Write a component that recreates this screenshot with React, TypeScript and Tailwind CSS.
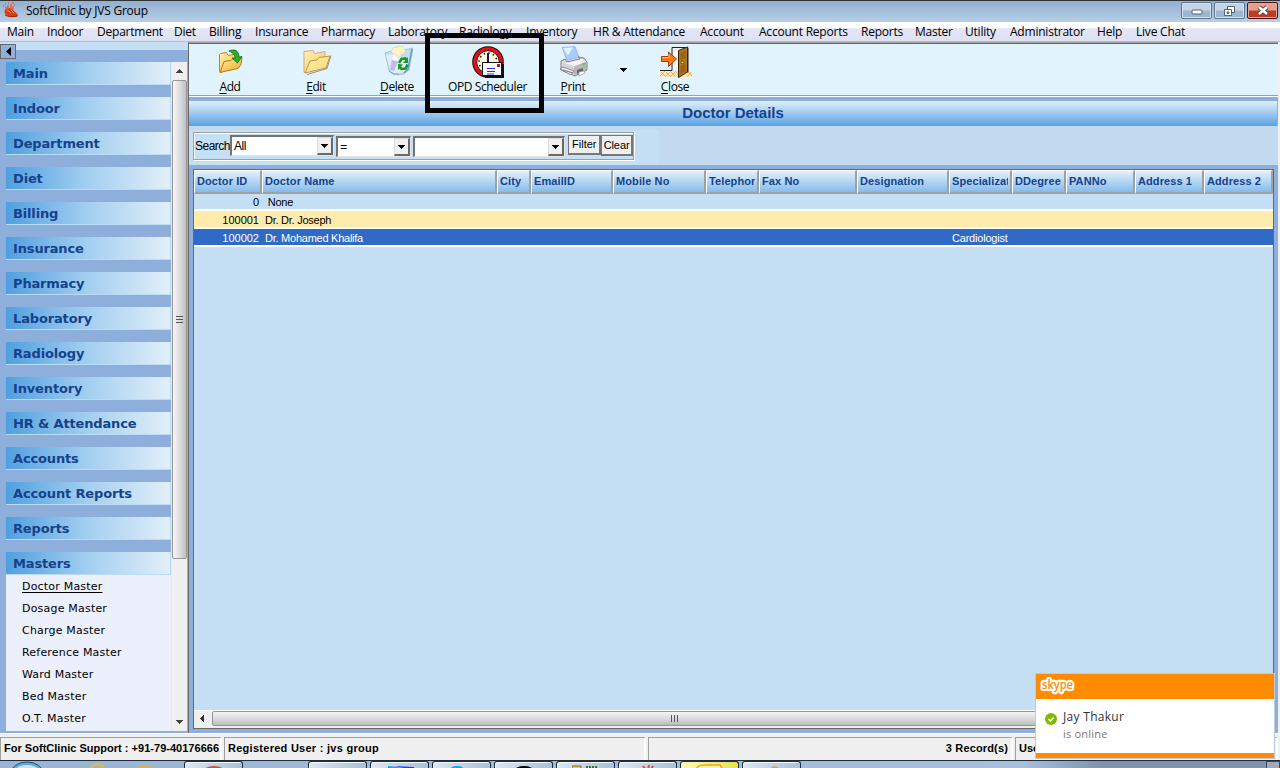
import { useState } from 'react';
import type { ReactNode } from 'react';

const menuItems = [
  'Main', 'Indoor', 'Department', 'Diet', 'Billing', 'Insurance', 'Pharmacy', 'Laboratory',
  'Radiology', 'Inventory', 'HR & Attendance', 'Account', 'Account Reports', 'Reports',
  'Master', 'Utility', 'Administrator', 'Help', 'Live Chat',
];

const modules = [
  'Main', 'Indoor', 'Department', 'Diet', 'Billing', 'Insurance', 'Pharmacy', 'Laboratory',
  'Radiology', 'Inventory', 'HR & Attendance', 'Accounts', 'Account Reports', 'Reports', 'Masters',
];

const masters = [
  'Doctor Master', 'Dosage Master', 'Charge Master', 'Reference Master',
  'Ward Master', 'Bed Master', 'O.T. Master',
];

const columns = [
  'Doctor ID', 'Doctor Name', 'City', 'EmailID', 'Mobile No', 'Telephone', 'Fax No',
  'Designation', 'Specialization', 'DDegree', 'PANNo', 'Address 1', 'Address 2',
];

interface Doctor {
  id: string;
  name: string;
  specialization: string;
}

const doctors: Doctor[] = [
  { id: '0', name: '\u00a0None', specialization: '' },
  { id: '100001', name: 'Dr. Dr. Joseph', specialization: '' },
  { id: '100002', name: 'Dr. Mohamed Khalifa', specialization: 'Cardiologist' },
];

const gridCols =
  'grid grid-cols-[68px_235px_34px_82px_93px_53px_98px_92px_63px_54px_69px_69px_69px]';

function HeartLogo() {
  return (
    <svg width="16" height="17" viewBox="0 0 16 17">
      <path d="M5 7c-3 1-3 5-1 7 3 2 9 3 12 1 0-2-2-4-4-5-1-2-4-4-7-3z" fill="#d8401c" />
      <path d="M6 8V4M9 8V3M11 8V5M3 6l3 2" stroke="#e8603a" strokeWidth="1.5" />
      <path d="M3 3h1M6 2h1M10 2h2M1 5h1M12 4h1" stroke="#e8603a" strokeWidth="1.5" />
      <path d="M5 9c1 2 3 1 4 3M9 9l3 3" stroke="#ff8c66" strokeWidth="1" fill="none" />
      <path d="M3 14c3 2 8 2 12 1" stroke="#a02008" fill="none" />
    </svg>
  );
}

function FolderIcon({ add }: { add?: boolean }) {
  return (
    <svg width="32" height="32" viewBox="0 0 32 32">
      <defs>
        <linearGradient id={add ? 'backAdd' : 'back'} x1="0" y1="0" x2="1" y2="1">
          <stop offset="0" stopColor="#fff2b0" />
          <stop offset="1" stopColor={add ? '#f2b632' : '#f5ce62'} />
        </linearGradient>
        <linearGradient id={add ? 'frontAdd' : 'front'} x1="0" y1="0" x2="1" y2="1">
          <stop offset="0" stopColor="#fff3a8" />
          <stop offset="1" stopColor={add ? '#efa820' : '#f7d774'} />
        </linearGradient>
      </defs>
      {add ? (
        <>
          <path d="M5.500 8.500l1-1 6-1 2 3 9-2v12l-17 7-1-1z" fill="url(#backAdd)" stroke="#c8851c" />
          <path d="M6 26.500l4-11 7-1 2-2 9-1-1 7-3 4-14 3z" fill="url(#frontAdd)" stroke="#b8741a" />
          <path d="M15 5c6-2.500 10 0 10 6l3-.5-4.500 6.500-5.500-5h3c0-3-2-5-6-7z" fill="#2cae2a" stroke="#0d6e12" strokeWidth=".8" />
        </>
      ) : (
        <>
          <path d="M7 28.500l20-6 4-13" stroke="#6b6b6b" fill="none" opacity=".7" />
          <path d="M4 5.500l9-1 1.500 3 10.500-2v15L4 26.500z" fill="url(#back)" stroke="#d9a48c" />
          <path d="M5 27l5-12 7-1 2-2.500 11-1.500-4 12z" fill="url(#front)" stroke="#b98a34" strokeWidth=".9" />
        </>
      )}
    </svg>
  );
}

function DeleteIcon() {
  return (
    <svg width="32" height="32" viewBox="0 0 32 32">
      <path d="M4 7l6-2 18-2 4-1-4 22-5 4-6 1-5-1-4-3z" fill="#c3ddf4" stroke="#9dbdd8" strokeWidth=".8" />
      <path d="M10 6l2-4 9-2 4 5-7 6z" fill="#fff3c2" stroke="#dfcf98" strokeWidth=".6" />
      <path d="M5 9l8-1 4 2 5 3 6-3-4 15-8 3-6-2z" fill="#e4ebfa" />
      <path d="M11 12l6 4-4 9-4-1z" fill="#c0bee2" />
      <path d="M13 8l5 7-7-1z" fill="#fff" />
      <path d="M31 3l-4 20-4 4" stroke="#6c9fcd" strokeWidth="1.600" fill="none" />
      <path d="M8 25l5 3h5" stroke="#7d9bb8" fill="none" />
      <path d="M18 17l2.500-4 4-.5 1.500 2" stroke="#159a22" strokeWidth="2.600" fill="none" />
      <path d="M27 11v6h-5z" fill="#159a22" />
      <path d="M26.500 18.500l-2 4-4 .5-2-2" stroke="#159a22" strokeWidth="2.600" fill="none" />
      <path d="M17 24v-6l5 .5z" fill="#159a22" />
    </svg>
  );
}

function SchedulerIcon() {
  return (
    <svg width="32" height="32" viewBox="0 0 32 32">
      <circle cx="16" cy="16" r="15.8" fill="#111" />
      <circle cx="16" cy="16" r="14.8" fill="#f00c14" />
      <circle cx="16" cy="16" r="11.300" fill="#fff8dc" stroke="#111" />
      <circle cx="16" cy="16" r="9" fill="none" stroke="#111" strokeWidth="1.6" strokeDasharray="1.5 3.21" />
      <path d="M16 7v9" stroke="#14145a" strokeWidth="2" />
      <path d="M13 18h19v14H13z" fill="#111" />
      <path d="M10.500 16.500h19v13h-19z" fill="#fff" stroke="#111" />
      <path d="M25 18h3v3h-3z" fill="#c01414" />
      <path d="M15 22.500h8M15 25.500h8M15 28h7" stroke="#2730ff" />
    </svg>
  );
}

function PrintIcon() {
  return (
    <svg width="32" height="32" viewBox="0 0 32 32">
      <path d="M5 1.500l13-1 4 11-12 3z" fill="#a9cbff" stroke="#8fa9d0" strokeWidth=".7" />
      <path d="M6 2l10-.5-5 8z" fill="#e6f1ff" />
      <path d="M4 15l4-2 2 3 13-3-2-2 6 1 3 4v8l-12 6-14-6z" fill="#d5d5d8" stroke="#808086" />
      <path d="M4 16l13 4 12-4-4-3-3 1-13 3z" fill="#f3f3f4" />
      <path d="M17 21v8l12-5v-8z" fill="#b4b4ba" />
      <path d="M3 23l3-2 11 4-3 4z" fill="#ececef" stroke="#77777d" strokeWidth=".8" />
      <path d="M6 24l10 3" stroke="#777" />
      <path d="M20 24l6-2v3l-6 3z" fill="#666" />
      <path d="M22 26l5-1 1 2-6 3z" fill="#fff" stroke="#888" strokeWidth=".6" />
      <path d="M25 18.500l3-1" stroke="#5bc94d" strokeWidth="1.800" />
    </svg>
  );
}

function CloseIcon() {
  return (
    <svg width="34" height="32" viewBox="0 0 34 32">
      <path d="M2 25h30l2 2v4H2z" fill="#ffe6bd" />
      <path d="M3 26l5 5M8 26l5 5M13 26l5 5M18 26l4 5M2 30l5-5M7 31l6-6M12 31l6-6M30 26l4 4M29 31l4-5" stroke="#f0a95c" strokeWidth=".9" />
      <path d="M2 24.500h12V1.500h14" stroke="#222" fill="none" />
      <path d="M15 2h6v22h-6z" fill="#f6f2ea" />
      <path d="M17 4h3v17h-3z" fill="#fff" />
      <path d="M20.500 4.500l9-3.500v25l-9 5.500z" fill="#ad7421" stroke="#3d2404" />
      <path d="M29.500 1l1 1v24l-1 1z" fill="#222" />
      <path d="M22.500 7l5-2v7l-5 2zM22.500 20l5-2v7l-5 3z" fill="#96621a" />
      <circle cx="24.500" cy="16.500" r="1.300" fill="#ffe14a" stroke="#222" strokeWidth=".6" />
      <path d="M3.500 10.500h7V6l8 7-8 7.500v-5h-7z" fill="#ff7a14" stroke="#a03a08" />
      <path d="M4 11.500h7V8" stroke="#ffc070" fill="none" />
    </svg>
  );
}

function Arrow({ dir, className = '' }: { dir: 'up' | 'down' | 'left'; className?: string }) {
  const paths = { up: 'M0 4h7L3.500 0z', down: 'M0 0h7L3.500 4z', left: 'M4 0v7L0 3.500z' };
  return (
    <svg
      width={dir === 'left' ? 4 : 7}
      height={dir === 'left' ? 7 : 4}
      className={className}
      shapeRendering="crispEdges"
    >
      <path d={paths[dir]} fill="currentColor" />
    </svg>
  );
}

function ToolButton({ label, width, icon, plain }: {
  label: string;
  width: string;
  icon: ReactNode;
  plain?: boolean;
}) {
  return (
    <button className={`flex flex-col items-center pt-[2px] ${width}`}>
      {icon}
      <span className="mt-px text-[12px] leading-[16px] tracking-[-0.4px] whitespace-nowrap">
        {plain ? label : <><u className="underline-offset-2">{label[0]}</u>{label.slice(1)}</>}
      </span>
    </button>
  );
}

function Combo({ value, width }: { value: string; width: string }) {
  return (
    <div className={`flex h-[21px] items-stretch border border-t-2 border-l-2 border-[#e6e6e6] border-t-[#737373] border-l-[#737373] bg-white ${width}`}>
      <span className="flex-1 pl-[2px] text-[12px] leading-[19px] tracking-[-0.4px]">{value}</span>
      <span className="flex w-[16px] items-center justify-center border border-r-2 border-b-2 border-t-[#ddd] border-l-[#ddd] border-r-[#696969] border-b-[#696969] bg-[#f0f0f0]">
        <Arrow dir="down" />
      </span>
    </div>
  );
}

function TitleBar() {
  const box = 'flex h-[17px] w-[31px] items-center justify-center rounded-[2px] border border-[#5f7590] bg-linear-to-b from-[#c4d5e7] from-45% to-[#9db7d3] to-55% shadow-[inset_0_0_0_1px_#d3e1ef]';
  return (
    <div className="flex h-[22px] shrink-0 items-start border-t border-[#2f3439] bg-linear-to-b from-[#94afd0] to-[#b6cee6] pl-[2px]">
      <HeartLogo />
      <span className="ml-[8px] text-[12px] leading-[20px] tracking-[-0.23px]">SoftClinic by JVS Group</span>
      <div className="mt-px mr-[2px] ml-auto flex gap-[2px]">
        <span className={box}>
          <svg width="12" height="6" className="mt-[3px]"><rect x="1" y="1" width="10" height="4" rx="1" fill="#fff" stroke="#536177" /></svg>
        </span>
        <span className={box}>
          <svg width="13" height="12" fill="#fff" stroke="#536177">
            <path d="M4.500 1.500h7v6h-7z" />
            <path d="M1.500 4.500h7v6h-7z" />
            <path d="M4 7h2v1.500H4z" fill="#9db7d3" />
          </svg>
        </span>
        <span className="flex h-[17px] w-[31px] items-center justify-center rounded-[2px] border border-[#4d1319] bg-linear-to-b from-[#e3a08f] from-45% to-[#b93c23] to-55% shadow-[inset_0_0_0_1px_#e3a79c]">
          <svg width="14" height="11" viewBox="0 0 14 11">
            <path d="M3 2l8 7M11 2L3 9" stroke="#59454b" strokeWidth="4.500" />
            <path d="M3 2l8 7M11 2L3 9" stroke="#fff" strokeWidth="2.500" />
          </svg>
        </span>
      </div>
    </div>
  );
}

function Sidebar({ active, onSelect }: { active: string; onSelect: (s: string) => void }) {
  return (
    <aside className="flex w-[188px] shrink-0 flex-col bg-[#8eaedb]">
      <div className="h-[20px] bg-linear-to-b from-[#c5dff4] from-40% to-[#8eaedb] to-40% pt-[2px]">
        <button className="flex h-[15px] w-[16px] items-center justify-center border border-[#696969] bg-[#8eaedb]">
          <svg width="5" height="9"><path d="M5 0v9L0 4.500z" /></svg>
        </button>
      </div>
      <div className="flex h-[669px] pl-[6px]">
        <nav className="flex w-[165px] flex-col font-['DejaVu_Sans',sans-serif]">
          {modules.map((m) => (
            <button
              key={m}
              className="mb-[12px] flex h-[23px] shrink-0 border-r border-b border-[#b9dcf6] bg-linear-to-r from-[#4f9fe0] via-[#a3cff0] to-[#e2eff9] pl-[7px] text-[13px] leading-[24px] font-bold tracking-[-0.15px] text-[#15428b] last-of-type:mb-0"
            >
              {m}
            </button>
          ))}
          <ul className="flex-1 bg-[#ecf0fc] pt-px pl-[16px]">
            {masters.map((m) => (
              <li
                key={m}
                onClick={() => onSelect(m)}
                className={`h-[22px] text-[11px] leading-[22px] tracking-[0.2px] ${m === active ? 'underline underline-offset-2' : ''}`}
              >
                {m}
              </li>
            ))}
          </ul>
        </nav>
        <div className="flex w-[16px] flex-col items-center border-l border-[#e4e8f0] bg-[#f0f0f0]">
          <Arrow dir="up" className="my-[7px] shrink-0 text-[#444]" />
          <div className="flex h-[479px] w-[15px] items-center justify-center rounded-[2px] border border-[#979797] bg-linear-to-r from-[#f6f6f6] via-[#dedee0] to-[#bfc0c4]">
            <svg width="7" height="8"><path d="M0 .5h7M0 3.500h7M0 6.500h7" stroke="#555" /></svg>
          </div>
          <Arrow dir="down" className="mt-auto mb-[7px] text-[#444]" />
        </div>
      </div>
    </aside>
  );
}

function DoctorGrid() {
  const [selected, setSelected] = useState('100002');

  const rowColor = (id: string, i: number) => {
    if (id === selected) return 'bg-[#316ac5] text-white';
    return i % 2 ? 'bg-[#ffecac]' : 'bg-[#c5dff5]';
  };

  return (
    <div className="mr-[4px] ml-[4px] flex h-[560px] flex-col border border-[#696969] bg-[#c5dff5] text-[11px]">
      <div className={`${gridCols} h-[24px] shrink-0`}>
        {columns.map((c) => (
          <div
            key={c}
            className="border-t border-r-2 border-b-2 border-l border-[#a0a0a0] border-t-white border-l-white bg-linear-to-b from-[#e3f0fb] to-[#85bbe9] pr-[2px] pl-[2px] leading-[21px] font-bold tracking-[0.1px] whitespace-nowrap text-[#15428b]"
          >
            <div className="overflow-hidden">{c}</div>
          </div>
        ))}
      </div>
      {doctors.map((d, i) => (
        <div
          key={d.id}
          onClick={() => setSelected(d.id)}
          className={`${gridCols} shrink-0 border-b-2 border-white ${rowColor(d.id, i)} ${i === 0 ? 'h-[17px] leading-[17px]' : 'h-[18px] leading-[19px]'}`}
        >
          <span className="pr-[3px] text-right">{d.id}</span>
          <span className="pl-[3px] tracking-[-0.25px]">{d.name}</span>
          <span className="col-start-9 pl-[3px] tracking-[-0.2px]">{d.specialization}</span>
        </div>
      ))}
      <div className="mt-auto flex h-[18px] items-start border-t border-white bg-[#efefef]">
        <Arrow dir="left" className="mt-[4px] mr-[8px] ml-[6px] shrink-0 text-[#333]" />
        <div className="flex h-[15px] w-[925px] items-center justify-center rounded-[2px] border border-[#979797] bg-linear-to-b from-[#f5f5f5] via-[#dcdcdc] to-[#bdbdbd]">
          <svg width="9" height="7"><path d="M1.500 0v7M4.500 0v7M7.500 0v7" stroke="#555" /></svg>
        </div>
      </div>
    </div>
  );
}

function StatusBar() {
  const cell = 'mt-[3px] h-[23px] border-t border-l border-r-2 border-[#a0a0a0] border-r-white px-[3px] leading-[21px] whitespace-nowrap';
  return (
    <footer className="flex h-[27px] shrink-0 border-t border-white bg-[#f0f0f0] font-['Liberation_Sans',sans-serif] text-[11px] font-bold">
      <div className={`${cell} mr-[2px] w-[222px] tracking-[0.02px]`}>For SoftClinic Support : +91-79-40176666</div>
      <div className={`${cell} mr-[2px] w-[422px] tracking-[0.27px]`}>Registered User : jvs group</div>
      <div className={`${cell} mr-[2px] w-[365px] text-right tracking-[0.15px]`}>3 Record(s)</div>
      <div className={`${cell} w-[263px]`}>User : Administrator</div>
    </footer>
  );
}

function Taskbar() {
  const btn = 'flex h-[8px] w-[59px] shrink-0 justify-center rounded-t-[3px] border border-b-0 border-[#1d2d3f] bg-linear-to-r from-[#dbe6f2] to-[#a9c0da] shadow-[inset_1px_1px_0_#f3f8fc]';
  return (
    <div className="flex h-[8px] shrink-0 overflow-hidden border-t border-[#202c3a] bg-linear-to-r from-[#9ab4d3] via-[#a7bfdc] via-80% to-[#7f93ab] to-86%">
      <svg width="184" height="8" className="shrink-0">
        <ellipse cx="27" cy="12" rx="16" ry="11" fill="#6ba7cf" stroke="#24506f" />
        <ellipse cx="27" cy="9" rx="11" ry="5" fill="#c6e4f3" />
        <path d="M90 8c2-5 11-6 14-2" stroke="#e7b83b" strokeWidth="2" fill="none" />
        <path d="M138 5h13v3h-13z" fill="#d8b35e" />
      </svg>
      <div className={`${btn} mr-[65px]`}>
        <svg width="30" height="8"><ellipse cx="15" cy="12" rx="13" ry="8" fill="#dd4b3e" /></svg>
      </div>
      <div className={`${btn} mr-[3px]`} />
      <div className={`${btn} mr-[3px]`}>
        <svg width="28" height="8"><path d="M2 4l26 3v1H2z" fill="#00a8f4" /><path d="M8 4l20 1v3z" fill="#1743e8" /></svg>
      </div>
      <div className={`${btn} mr-[3px]`}>
        <svg width="28" height="8"><ellipse cx="9" cy="9" rx="8" ry="5" fill="#00aff0" /><ellipse cx="18" cy="10" rx="8" ry="4" fill="#00aff0" /></svg>
      </div>
      <div className={`${btn} mr-[3px]`}>
        <svg width="24" height="8"><ellipse cx="12" cy="9" rx="10" ry="5" /></svg>
      </div>
      <div className={`${btn} mr-[3px]`}>
        <svg width="28" height="8"><path d="M0 4h9v4H0z" fill="#e0c66a" stroke="#8a6d1c" /><path d="M14 5h12" stroke="#37772c" strokeWidth="2" strokeDasharray="2 1" /></svg>
      </div>
      <div className={`${btn} mr-[3px]`}>
        <svg width="18" height="8"><path d="M4 4l3 4M10 3l-1 5M14 4l-2 4" stroke="#dc4c24" strokeWidth="2" /></svg>
      </div>
      <div className="mr-[3px] flex h-[8px] w-[59px] shrink-0 justify-center rounded-t-[3px] border border-b-0 border-[#1d2d3f] bg-linear-to-r from-[#fff8b4] to-[#e9df4a]">
        <svg width="30" height="8"><path d="M1 8c1-5 6-5 10-5h14l3 5" fill="#fff3ac" stroke="#e9a71c" strokeWidth="1.500" /></svg>
      </div>
      <div className={btn}>
        <svg width="24" height="8"><path d="M9 8c3-5 9-5 11 0z" fill="#d4a067" /></svg>
      </div>
      <div className="ml-auto h-[8px] w-[14px] border border-[#3e4a59] bg-[#a0aab8]" />
    </div>
  );
}

function SkypePopup() {
  return (
    <div className="absolute top-[673px] left-[1035px] flex h-[86px] w-[240px] flex-col border border-[#b9cbdc] bg-white font-['Open_Sans',sans-serif]">
      <div className="h-[25px] bg-[#ff8c00] pt-[3px] pl-[3px]">
        <svg width="40" height="20" viewBox="0 0 40 20">
          <text
            x="3"
            y="12"
            textLength="31"
            lengthAdjust="spacingAndGlyphs"
            fontSize="12.500"
            fontWeight="600"
            fill="#ff8c00"
            stroke="#fff"
            strokeWidth="4.500"
            strokeLinejoin="round"
            paintOrder="stroke"
            fontFamily="Open Sans"
          >
            skype
          </text>
        </svg>
      </div>
      <div className="flex flex-1 pt-[10px] pl-[9px]">
        <svg width="12" height="12" className="mt-[4px] mr-[6px]">
          <circle cx="6" cy="6" r="6" fill="#7fba00" />
          <path d="M3.500 6l2 2 3-3.500" stroke="#fff" strokeWidth="1.600" fill="none" />
        </svg>
        <div>
          <p className="text-[12px] leading-[16px] tracking-[0.3px] text-[#333]">Jay Thakur</p>
          <p className="mt-px text-[11px] leading-[15px] tracking-[0.2px] text-[#777]">is online</p>
        </div>
      </div>
      <div className="h-[5px] bg-[#ff8c00]" />
    </div>
  );
}

export default function App() {
  const [active, setActive] = useState('Doctor Master');

  return (
    <div className="relative flex h-[768px] w-[1280px] flex-col overflow-hidden bg-[#f0f0f0] font-['Open_Sans',sans-serif] text-black">
      <TitleBar />
      <nav className="grid h-[20px] shrink-0 grid-cols-[40px_50px_77px_35px_46px_66px_67px_71px_67px_67px_107px_59px_102px_54px_50px_45px_87px_39px_80px] border-b border-[#b6bcce] bg-linear-to-b from-white from-30% via-[#e3e7f5] via-35% to-[#dce0f2] pl-[7px] text-[12px] leading-[20px] tracking-[-0.22px] whitespace-nowrap">
        {menuItems.map((m) => (
          <span key={m}>{m}</span>
        ))}
      </nav>

      <div className="flex h-[691px] shrink-0">
        <Sidebar active={active} onSelect={setActive} />
        <main className="mr-[2px] flex w-[1090px] flex-col border-t border-l border-t-[#a0a0a0] border-l-[#696969] bg-[#8eaedb] font-['Liberation_Sans',sans-serif]">
          <div className="flex h-[53px] shrink-0 border-t border-b border-t-[#696969] border-b-[#a0a0a0] bg-[#e1f3fd] font-['Open_Sans',sans-serif] shadow-[0_1px_0_#fff]">
            <ToolButton label="Add" width="w-[82px]" icon={<FolderIcon add />} />
            <ToolButton label="Edit" width="w-[90px]" icon={<FolderIcon />} />
            <ToolButton label="Delete" width="w-[72px]" icon={<DeleteIcon />} />
            <ToolButton label="OPD Scheduler" width="w-[109px]" icon={<SchedulerIcon />} plain />
            <ToolButton label="Print" width="w-[62px]" icon={<PrintIcon />} />
            <button className="flex w-[38px] items-center justify-center">
              <Arrow dir="down" />
            </button>
            <ToolButton label="Close" width="w-[66px]" icon={<CloseIcon />} />
          </div>

          <h1 className="mt-[5px] mr-px h-[25px] shrink-0 bg-linear-to-b from-[#e1effa] to-[#58a2e2] text-center text-[15px] leading-[24px] font-bold text-[#15428b]">
            Doctor Details
          </h1>

          <div className="flex h-[39px] shrink-0 bg-[#c3d9ef]">
            <div className="mt-[4px] flex w-[470px] bg-[#c5dff5] pl-[4px]">
              <div className="mt-[2px] flex h-[28px] w-[441px] items-start border border-[#a0a0a0] pt-[2px] pl-px shadow-[inset_1px_1px_0_#fff,1px_1px_0_#fff]">
                <span className="w-[35px] text-[12px] leading-[22px] tracking-[-0.5px]">Search</span>
                <Combo value="All" width="w-[105px]" />
                <div className="mx-[2px] pt-px">
                  <Combo value="=" width="w-[75px]" />
                </div>
                <div className="pt-px">
                  <Combo value="" width="w-[152px]" />
                </div>
                <button className="ml-[3px] h-[20px] w-[33px] border border-r-2 border-b-2 border-[#777] bg-[#f0f0f0] text-[11px] leading-[17px]">Filter</button>
                <button className="h-[21px] w-[32px] border border-r-2 border-b-2 border-[#777] bg-[#f0f0f0] text-[11px] leading-[18px] tracking-[-0.1px]">Clear</button>
              </div>
            </div>
          </div>

          <div className="mt-[4px]">
            <DoctorGrid />
          </div>
        </main>
      </div>

      <StatusBar />
      <Taskbar />

      <div className="pointer-events-none absolute top-[33px] left-[425px] h-[80px] w-[119px] border-[5px] border-black" />
      <SkypePopup />
    </div>
  );
}
